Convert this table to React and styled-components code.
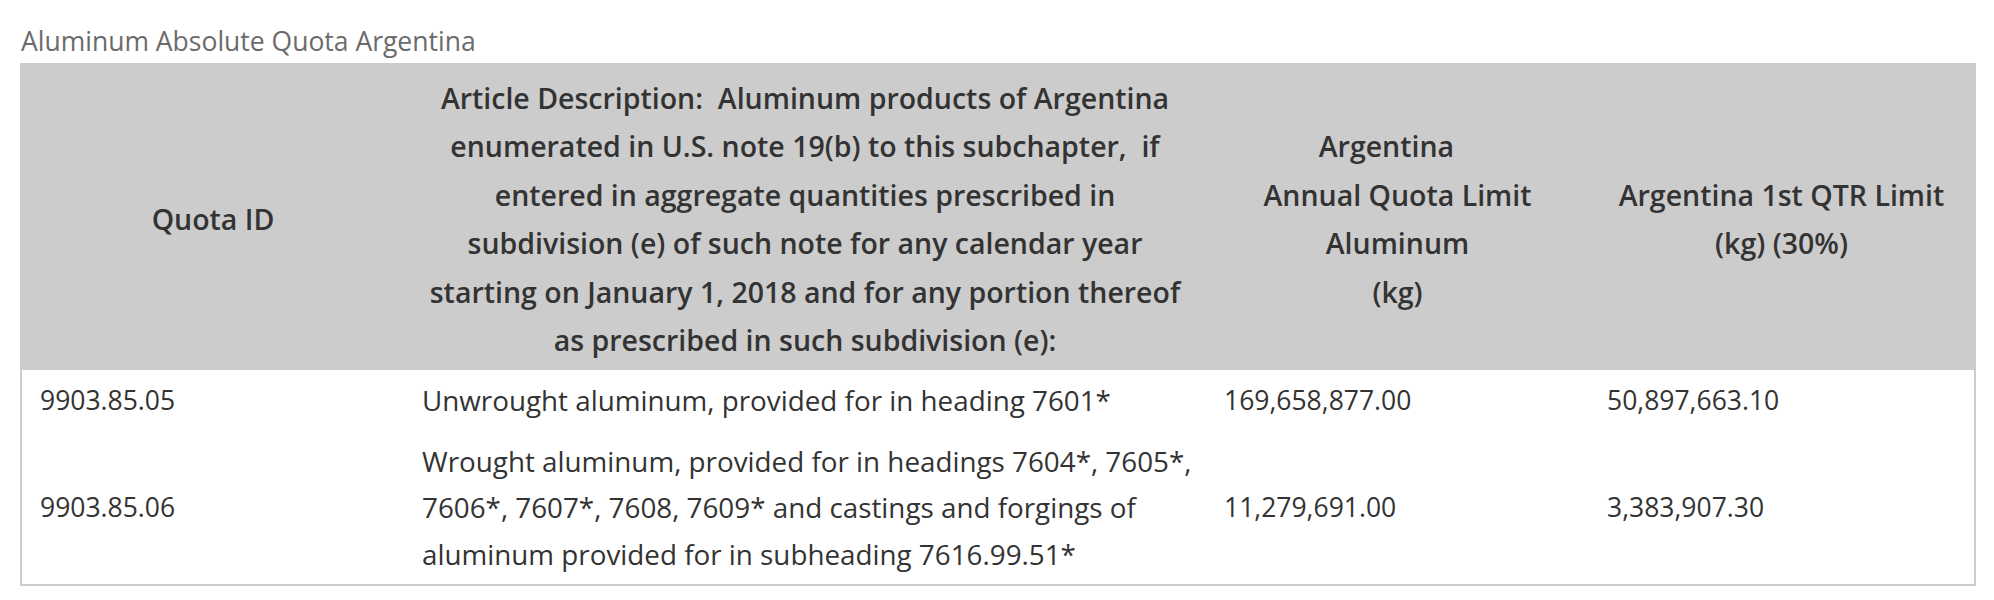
import React from 'react'
import styled, { createGlobalStyle } from 'styled-components'

const FONT = `'Open Sans', 'Noto Sans', sans-serif`

const GlobalStyle = createGlobalStyle`
  html, body {
    margin: 0;
    padding: 0;
    background: #fff;
  }
  body {
    font-family: ${FONT};
    color: #333;
  }
`

const Page = styled.div`
  padding: 24px 19px 0 20px;
`

const Caption = styled.div`
  font-size: 26.5px;
  line-height: 34px;
  color: #6b6b6b;
  margin: 0 0 5px 1px;
`

const Table = styled.table`
  width: 100%;
  table-layout: fixed;
  border-collapse: collapse;
  border: 2px solid #cccccc;
`

const HeadRow = styled.tr`
  background: #cccccc;
`

const HeadCell = styled.th`
  font-weight: 600;
  font-size: 28.5px;
  line-height: 48.4px;
  color: #333;
  text-align: center;
  vertical-align: middle;
  padding: 9px 18px 6px;
  white-space: nowrap;
`

const Cell = styled.td`
  font-size: ${(p) => (p.$numeric ? '26.5px' : '27.8px')};
  line-height: 46.5px;
  color: #333;
  text-align: left;
  vertical-align: middle;
  padding: 7px 18px;
  white-space: nowrap;
`

const columns = [383, 802, 383, 386]

const rows = [
  {
    id: '9903.85.05',
    desc: ['Unwrought aluminum, provided for in heading 7601*'],
    annual: '169,658,877.00',
    first: '50,897,663.10',
  },
  {
    id: '9903.85.06',
    desc: [
      'Wrought aluminum, provided for in headings 7604*, 7605*,',
      '7606*, 7607*, 7608, 7609* and castings and forgings of',
      'aluminum provided for in subheading 7616.99.51*',
    ],
    annual: '11,279,691.00',
    first: '3,383,907.30',
  },
]

const Lines = ({ lines }) =>
  lines.map((line, i) => (
    <React.Fragment key={i}>
      {i > 0 && <br />}
      {line}
    </React.Fragment>
  ))

const App = () => (
  <Page>
    <GlobalStyle />
    <Caption>Aluminum Absolute Quota Argentina</Caption>
    <Table>
      <colgroup>
        {columns.map((w, i) => (
          <col key={i} style={{ width: w }} />
        ))}
      </colgroup>
      <thead>
        <HeadRow>
          <HeadCell>Quota ID</HeadCell>
          <HeadCell>
            <Lines
              lines={[
                'Article Description:\u00a0 Aluminum products of Argentina',
                'enumerated in U.S. note 19(b) to this subchapter,\u00a0 if',
                'entered in aggregate quantities prescribed in',
                'subdivision (e) of such note for any calendar year',
                'starting on January 1, 2018 and for any portion thereof',
                'as prescribed in such subdivision (e):',
              ]}
            />
          </HeadCell>
          <HeadCell>
            <Lines lines={['Argentina\u00a0\u00a0\u00a0', 'Annual Quota Limit', 'Aluminum', '(kg)']} />
          </HeadCell>
          <HeadCell>
            <Lines lines={['Argentina 1st QTR Limit', '(kg) (30%)']} />
          </HeadCell>
        </HeadRow>
      </thead>
      <tbody>
        {rows.map((r) => (
          <tr key={r.id}>
            <Cell $numeric>{r.id}</Cell>
            <Cell>
              <Lines lines={r.desc} />
            </Cell>
            <Cell $numeric>{r.annual}</Cell>
            <Cell $numeric>{r.first}</Cell>
          </tr>
        ))}
      </tbody>
    </Table>
  </Page>
)

export default App
